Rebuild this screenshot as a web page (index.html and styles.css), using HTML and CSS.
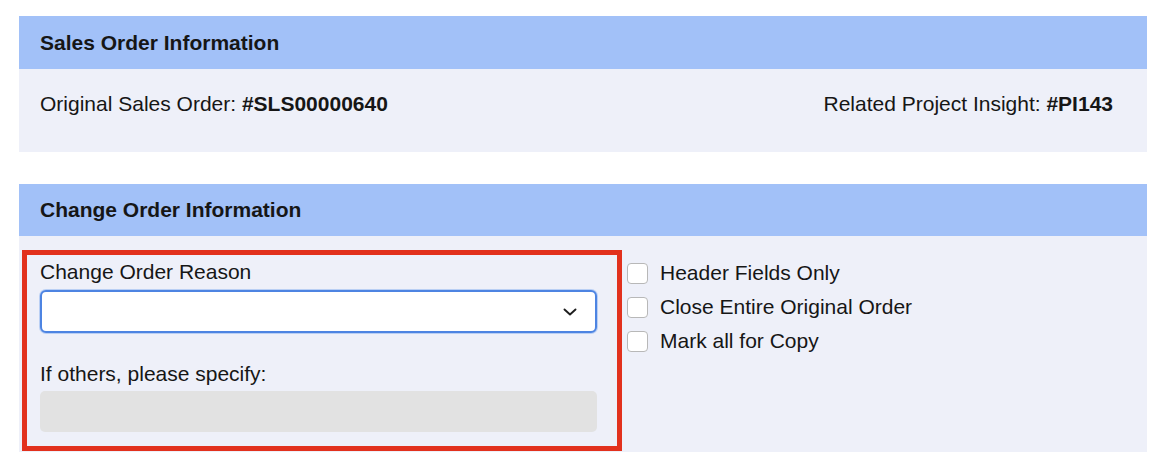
FILE: index.html
```html
<!DOCTYPE html>
<html>
  <head>
    <meta charset="UTF-8" />
    <title>Change Order</title>
    <link rel="stylesheet" href="styles.css">
  </head>
  <body>
    <div class="container">
      <div class="panel">
        <div class="panel-title">Sales Order Information</div>
        <div class="panel-body info-row">
          <span>Original Sales Order: <b>#SLS00000640</b></span>
          <span>Related Project Insight: <b>#PI143</b></span>
        </div>
      </div>

      <div class="panel">
        <div class="panel-title title-short">Change Order Information</div>
        <div class="panel-body change-body">
          <div class="reason-group">
            <label class="field-label">Change Order Reason</label>
            <div class="select-box">
              <svg class="chevron" width="14" height="8" viewBox="0 0 14 8">
                <polyline points="1.5,1.5 7,6.5 12.5,1.5" fill="none" stroke="#1e1e1e" stroke-width="1.9" stroke-linecap="round" stroke-linejoin="round" />
              </svg>
            </div>
            <label class="field-label others-label">If others, please specify:</label>
            <div class="text-box disabled"></div>
          </div>

          <div class="check-list">
            <label class="check-item"><input type="checkbox" /> Header Fields Only</label>
            <label class="check-item"><input type="checkbox" /> Close Entire Original Order</label>
            <label class="check-item"><input type="checkbox" /> Mark all for Copy</label>
          </div>
        </div>
      </div>
    </div>
  </body>
</html>
```

FILE: styles.css
```css
body {
  margin: 0;
  padding: 16px 0 0 19px;
  font-family: 'Liberation Sans', Arial, Helvetica, sans-serif;
  font-size: 21px;
  line-height: 24px;
  color: #161616;
  background: #fff;
}

.container {
  width: 1128px;
}

.panel {
  margin-bottom: 32px;
  background-color: #eef0f9;
}

.panel-title {
  height: 53px;
  line-height: 53px;
  padding-left: 21px;
  font-weight: bold;
  background-color: #a2c1f8;
}

.panel-title.title-short {
  height: 52px;
  line-height: 52px;
}

.info-row {
  display: flex;
  justify-content: space-between;
  padding: 23px 34px 36px 21px;
}

.change-body {
  display: flex;
  align-items: flex-start;
  padding: 14px 0 1px 3px;
}

/* highlighted reason block */
.reason-group {
  width: 600px;
  box-sizing: border-box;
  border: 5px solid #e2311d;
  padding: 5px 20px 14px 13px;
}

.field-label {
  display: block;
}

.others-label {
  margin-top: 29px;
}

.select-box {
  position: relative;
  height: 43px;
  margin-top: 6px;
  box-sizing: border-box;
  border: 2px solid #4d84e2;
  border-radius: 6px;
  background: #fff;
  box-shadow: 0 0 0 1px #b9cff4;
}

.chevron {
  position: absolute;
  right: 18px;
  top: 16px;
}

.text-box {
  height: 41px;
  margin-top: 5px;
  border-radius: 5px;
}

.text-box.disabled {
  background-color: #e2e2e2;
}

.check-list {
  padding: 6px 0 0 5px;
}

.check-item {
  display: flex;
  align-items: center;
  height: 34px;
}

.check-item input {
  appearance: none;
  -webkit-appearance: none;
  width: 21px;
  height: 21px;
  margin: 0 12px 0 0;
  box-sizing: border-box;
  border: 1px solid #b8b8b8;
  border-radius: 4px;
  background: #fff;
}
```
